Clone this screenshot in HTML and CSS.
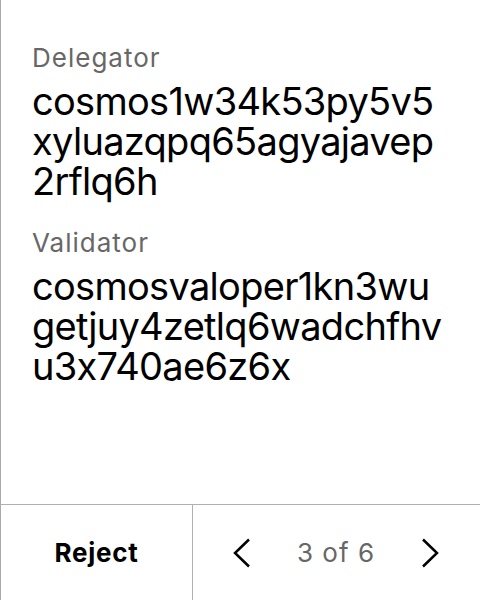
FILE: index.html
```html
<!DOCTYPE html>
<html>
<head>
<meta charset="utf-8">
<link rel="stylesheet" href="styles.css">
</head>
<body>
<div class="screen">
  <main class="content">
    <section class="field">
      <div class="label">Delegator</div>
      <div class="value">cosmos1w34k53py5v5xyluazqpq65agyajavep2rflq6h</div>
    </section>
    <section class="field">
      <div class="label">Validator</div>
      <div class="value">cosmosvaloper1kn3wugetjuy4zetlq6wadchfhvu3x740ae6z6x</div>
    </section>
  </main>
  <footer class="footer">
    <div class="reject">Reject</div>
    <div class="pager">
      <svg class="chev" width="18" height="30" viewBox="0 0 18 30"><polyline points="16,1.5 2,15 16,28.5" fill="none" stroke="#000" stroke-width="2.5"/></svg>
      <span class="count">3 of 6</span>
      <svg class="chev" width="18" height="30" viewBox="0 0 18 30"><polyline points="2,1.5 16,15 2,28.5" fill="none" stroke="#000" stroke-width="2.5"/></svg>
    </div>
  </footer>
</div>
</body>
</html>
```
FILE: styles.css
```css
html, body {
  margin: 0;
  padding: 0;
  background: #fff;
}
body {
  font-family: Inter, "Noto Sans", sans-serif;
  font-feature-settings: "calt" 0;
  color: #000;
}
.screen {
  width: 480px;
  height: 600px;
  box-sizing: border-box;
  border-left: 1px solid #aaaaaa;
  display: flex;
  flex-direction: column;
}
.content {
  flex: 1;
  padding: 42px 32px 0 31px;
  display: flex;
  flex-direction: column;
  gap: 26px;
}
.label {
  font-size: 26px;
  line-height: 32px;
  letter-spacing: 1px;
  color: #676767;
  margin-bottom: 7px;
}
.value {
  font-size: 38px;
  line-height: 40px;
  letter-spacing: -0.7px;
  word-break: break-all;
}
.footer {
  height: 96px;
  box-sizing: border-box;
  border-top: 1px solid #b0b0b0;
  display: flex;
}
.reject {
  width: 191px;
  border-right: 1px solid #b0b0b0;
  display: flex;
  align-items: center;
  justify-content: center;
  font-size: 26px;
  font-weight: 700;
  letter-spacing: 0.7px;
}
.pager {
  flex: 1;
  display: flex;
  align-items: center;
  justify-content: space-between;
  padding: 0 41px 0 40px;
}
.chev {
  display: block;
}
.count {
  font-size: 26px;
  letter-spacing: 1px;
  color: #676767;
}
```
